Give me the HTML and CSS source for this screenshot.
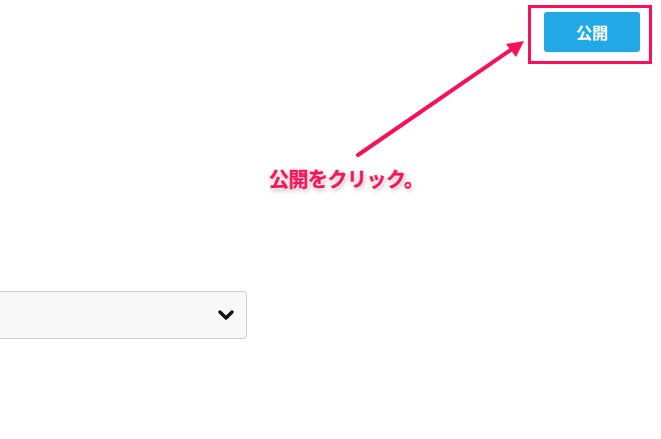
FILE: index.html
```html
<!DOCTYPE html>
<html lang="ja">
<head>
  <meta charset="UTF-8">
  <title>公開</title>
  <link rel="stylesheet" href="styles.css">
</head>
<body>
  <div class="topbar">
    <button class="publish">公開</button>
  </div>

  <div class="field">
    <svg class="chevron" width="16" height="10" viewBox="0 0 16 10">
      <path d="M2 2 L8 8 L14 2" fill="none" stroke="#111" stroke-width="3.4" stroke-linecap="round" stroke-linejoin="round"/>
    </svg>
  </div>

  <!-- 注釈 -->
  <svg class="note-lines" width="661" height="439" viewBox="0 0 661 439">
    <rect x="529.5" y="6.5" width="121" height="56" fill="none" stroke="#f8105a" stroke-width="3"/>
    <line x1="358" y1="155" x2="512" y2="49" stroke="#f8105a" stroke-width="4" stroke-linecap="round"/>
    <path d="M524 41 L506 44 L516 57 Z" fill="#f8105a"/>
  </svg>
  <span class="note-text">公開をクリック。</span>
</body>
</html>
```

FILE: styles.css
```css
* {
  margin: 0;
  padding: 0;
  box-sizing: border-box;
}

body {
  width: 661px;
  height: 439px;
  background-color: #fff;
  font-family: "Noto Sans CJK JP", "Noto Sans", sans-serif;
  position: relative;
  overflow: hidden;
}

.topbar {
  display: flex;
  justify-content: flex-end;
  padding: 12px 21px 0 0;
}

.publish {
  width: 96px;
  height: 40px;
  border: none;
  border-radius: 3px;
  background-color: #20a8e7;
  color: #fff;
  font-family: inherit;
  font-size: 16px;
  font-weight: bold;
}

.field {
  display: flex;
  align-items: center;
  justify-content: flex-end;
  width: 247px;
  height: 48px;
  margin-top: 239px;
  padding-right: 12px;
  background-color: #f8f8f8;
  border: 1px solid #cfcfcf;
  border-left: none;
  border-radius: 0 4px 4px 0;
}

.note-lines {
  position: absolute;
  top: 0;
  left: 0;
}

.note-text {
  position: absolute;
  left: 269px;
  top: 166px;
  font-size: 20px;
  font-weight: bold;
  line-height: 26px;
  letter-spacing: -0.5px;
  color: #f4155a;
  -webkit-text-stroke: 0.4px #f4155a;
  text-shadow: 0 0 2px #fff, 0 0 2px #fff, 0 0 3px #fff, 1px 2px 5px rgba(0, 0, 0, 0.35);
}
```
